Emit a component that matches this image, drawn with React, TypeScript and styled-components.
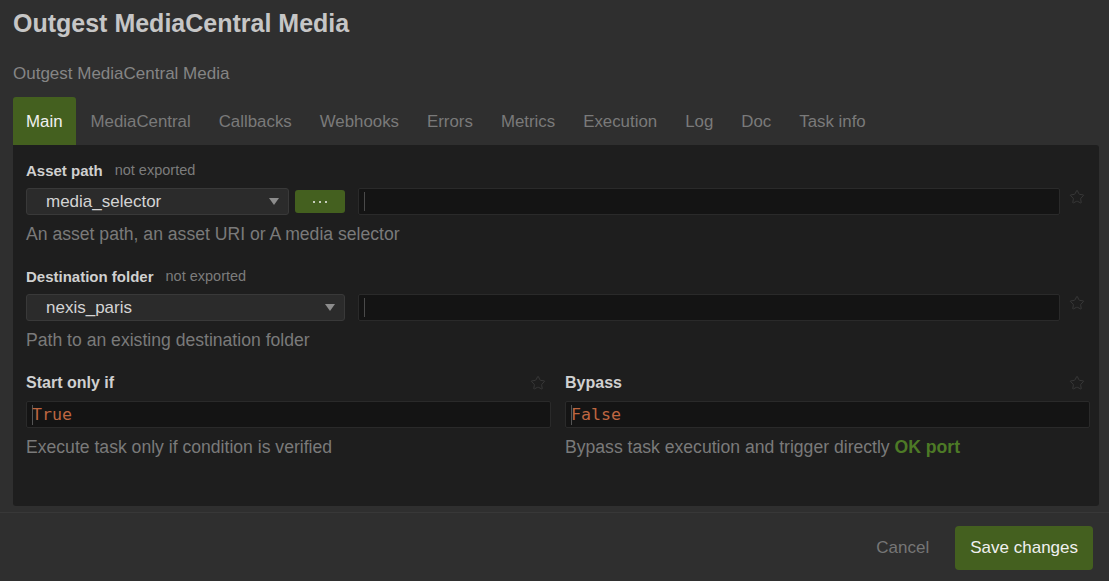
import React from 'react';
import styled, { createGlobalStyle } from 'styled-components';
import { Star } from 'lucide-react';

const green = '#44601f';

const GlobalStyle = createGlobalStyle`
  html, body {
    margin: 0;
    padding: 0;
    background: #2f2f2f;
    font-family: "Liberation Sans", Arial, sans-serif;
  }
`;

const Page = styled.div`
  width: 1109px;
  height: 581px;
  display: flex;
  flex-direction: column;
  overflow: hidden;
`;

const Header = styled.div`
  padding: 8px 13px 0 13px;
`;

const Title = styled.h1`
  margin: 0;
  font-size: 25px;
  line-height: 30px;
  font-weight: bold;
  color: #c6c6c6;
`;

const Subtitle = styled.div`
  margin-top: 25px;
  font-size: 17px;
  line-height: 22px;
  color: #858585;
`;

const Tabs = styled.div`
  display: flex;
  margin-top: 12px;
`;

const Tab = styled.div<{ $active?: boolean }>`
  height: 48px;
  box-sizing: border-box;
  padding: 2px ${(p) => (p.$active ? '13px' : '14px')} 0;
  line-height: 46px;
  margin-right: ${(p) => (p.$active ? '1px' : '0')};
  font-size: 16.85px;
  color: ${(p) => (p.$active ? '#f0f0f0' : '#7a7a7a')};
  background: ${(p) => (p.$active ? green : 'transparent')};
  border-radius: 3px 3px 0 0;
`;

const Panel = styled.div`
  margin: 0 10px 0 13px;
  height: 361px;
  box-sizing: border-box;
  padding: 12px 9px 0 13px;
  background: #1e1e1e;
  border-radius: 0 3px 3px 3px;
  display: flex;
  flex-direction: column;
  gap: 18px;
`;

const Field = styled.div`
  display: flex;
  flex-direction: column;
`;

const LabelRow = styled.div`
  display: flex;
  align-items: center;
  height: 24px;
  padding-top: 1px;
`;

const Label = styled.span`
  font-size: 15px;
  font-weight: bold;
  color: #d0d0d0;
`;

const BigLabel = styled(Label)`
  font-size: 16px;
  flex: 1;
`;

const Note = styled.span`
  margin-left: 12px;
  font-size: 14.5px;
  color: #7c7c7c;
`;

const InputRow = styled.div`
  display: flex;
  align-items: center;
  margin-top: 6px;
  height: 27px;
`;

const Select = styled.div<{ $width: number }>`
  width: ${(p) => p.$width}px;
  height: 27px;
  box-sizing: border-box;
  display: flex;
  align-items: center;
  padding: 0 9px 0 19px;
  background: #2b2b2b;
  border: 1px solid #393939;
  border-radius: 3px;
  font-size: 17px;
  color: #d4d4d4;
`;

const SelectText = styled.span`
  flex: 1;
`;

const Caret = styled.span`
  width: 0;
  height: 0;
  border-left: 5px solid transparent;
  border-right: 5px solid transparent;
  border-top: 7px solid #8c8c8c;
`;

const DotsButton = styled.div`
  width: 50px;
  height: 23px;
  margin-left: 6px;
  background: ${green};
  border-radius: 3px;
  display: flex;
  align-items: center;
  justify-content: center;
  gap: 4px;
`;

const Dot = styled.span`
  width: 2px;
  height: 2px;
  background: #f2f2f2;
  border-radius: 1px;
`;

const TextInput = styled.div`
  flex: 1;
  height: 27px;
  box-sizing: border-box;
  margin-left: 13px;
  padding-left: 5px;
  display: flex;
  align-items: center;
  background: #141414;
  border: 1px solid #2a2a2a;
  border-radius: 2px;
`;

const Cursor = styled.span`
  width: 1px;
  height: 19px;
  background: #4a4a4a;
`;

const StarSlot = styled.div`
  width: 30px;
  display: flex;
  justify-content: center;
  align-self: flex-start;
  padding: 1px 0 0 4px;
  box-sizing: border-box;
`;

const Desc = styled.div`
  margin-top: 8px;
  font-size: 17.6px;
  line-height: 22px;
  color: #7a7a7a;
`;

const Columns = styled.div`
  display: grid;
  grid-template-columns: 1fr 1fr;
  column-gap: 14px;
  margin-top: 1px;
`;

const CodeInput = styled.div`
  margin-top: 6px;
  height: 27px;
  box-sizing: border-box;
  padding-left: 5px;
  display: flex;
  align-items: center;
  background: #141414;
  border: 1px solid #2a2a2a;
  border-radius: 2px;
  font-family: "DejaVu Sans Mono", "Liberation Mono", monospace;
  font-size: 16.6px;
  color: #bd6641;
`;

const CodeCursor = styled.span`
  width: 1px;
  height: 20px;
  background: #555;
  margin-right: -1px;
`;

const OkPort = styled.span`
  font-weight: bold;
  color: #4d7a26;
`;

const StarIcon = styled(Star)`
  color: #3b3b3b;
  margin-right: 5px;
`;

const Footer = styled.div`
  margin-top: 6px;
  border-top: 1px solid #383838;
  display: flex;
  justify-content: flex-end;
  align-items: center;
  gap: 26px;
  padding: 13px 16px 0 0;
`;

const CancelButton = styled.div`
  font-size: 17px;
  color: #767676;
`;

const SaveButton = styled.div`
  height: 44px;
  padding: 0 15px;
  display: flex;
  align-items: center;
  background: ${green};
  border-radius: 4px;
  font-size: 17px;
  color: #f0f0f0;
`;

const tabs = [
  'Main',
  'MediaCentral',
  'Callbacks',
  'Webhooks',
  'Errors',
  'Metrics',
  'Execution',
  'Log',
  'Doc',
  'Task info',
];

const App = () => (
  <Page>
    <GlobalStyle />
    <Header>
      <Title>Outgest MediaCentral Media</Title>
      <Subtitle>Outgest MediaCentral Media</Subtitle>
      <Tabs>
        {tabs.map((t, i) => (
          <Tab key={t} $active={i === 0}>
            {t}
          </Tab>
        ))}
      </Tabs>
    </Header>
    <Panel>
      <Field>
        <LabelRow>
          <Label>Asset path</Label>
          <Note>not exported</Note>
        </LabelRow>
        <InputRow>
          <Select $width={263}>
            <SelectText>media_selector</SelectText>
            <Caret />
          </Select>
          <DotsButton>
            <Dot />
            <Dot />
            <Dot />
          </DotsButton>
          <TextInput>
            <Cursor />
          </TextInput>
          <StarSlot>
            <Star size={16} strokeWidth={1.3} color="#3b3b3b" />
          </StarSlot>
        </InputRow>
        <Desc>An asset path, an asset URI or A media selector</Desc>
      </Field>
      <Field>
        <LabelRow>
          <Label>Destination folder</Label>
          <Note>not exported</Note>
        </LabelRow>
        <InputRow>
          <Select $width={319}>
            <SelectText>nexis_paris</SelectText>
            <Caret />
          </Select>
          <TextInput>
            <Cursor />
          </TextInput>
          <StarSlot>
            <Star size={16} strokeWidth={1.3} color="#3b3b3b" />
          </StarSlot>
        </InputRow>
        <Desc>Path to an existing destination folder</Desc>
      </Field>
      <Columns>
        <Field>
          <LabelRow>
            <BigLabel>Start only if</BigLabel>
            <StarIcon size={16} strokeWidth={1.3} />
          </LabelRow>
          <CodeInput>
            <CodeCursor />
            True
          </CodeInput>
          <Desc>Execute task only if condition is verified</Desc>
        </Field>
        <Field>
          <LabelRow>
            <BigLabel>Bypass</BigLabel>
            <StarIcon size={16} strokeWidth={1.3} />
          </LabelRow>
          <CodeInput>
            <CodeCursor />
            False
          </CodeInput>
          <Desc>
            Bypass task execution and trigger directly <OkPort>OK port</OkPort>
          </Desc>
        </Field>
      </Columns>
    </Panel>
    <Footer>
      <CancelButton>Cancel</CancelButton>
      <SaveButton>Save changes</SaveButton>
    </Footer>
  </Page>
);

export default App;
